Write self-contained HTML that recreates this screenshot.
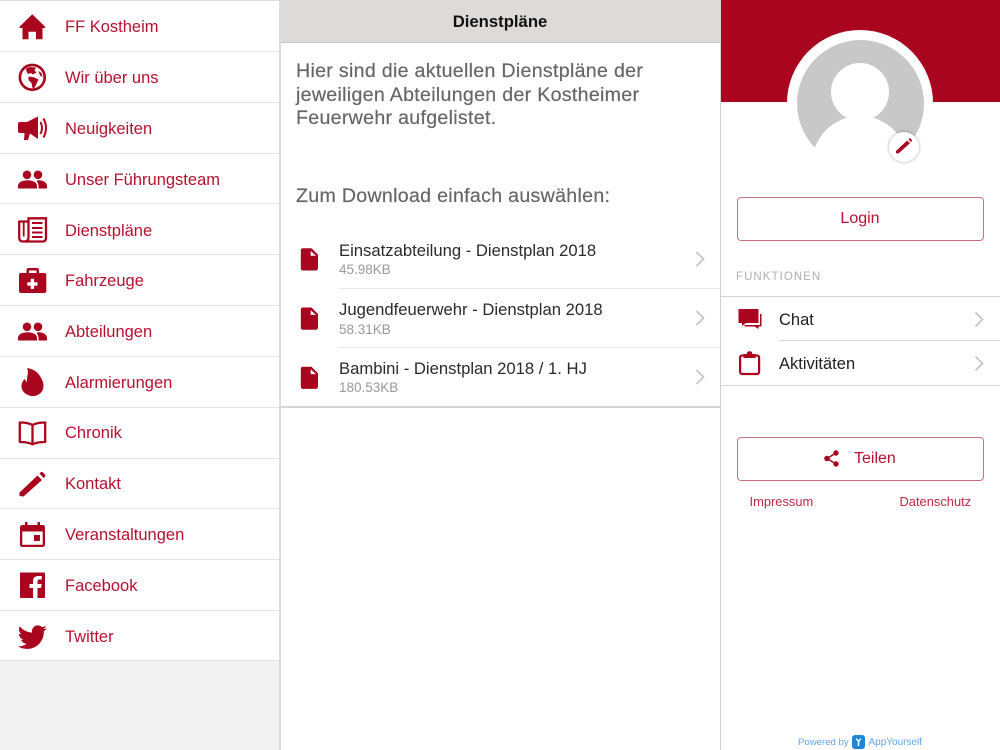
<!DOCTYPE html>
<html lang="de">
<head>
<meta charset="utf-8">
<title>Dienstpläne</title>
<style>
html,body{margin:0;padding:0;width:1000px;height:750px;overflow:hidden;background:#fff;font-family:"Liberation Sans",sans-serif}
.a{position:absolute}
.t{position:absolute;white-space:nowrap}
.m{left:65px;font-size:16.5px;line-height:20px;color:#b7112f}
.l{position:absolute;background:#e4e4e4;height:1px}
.it{left:339px;font-size:16.65px;line-height:20px;color:#2b2b2b}
.sz{left:339px;font-size:13.5px;line-height:16px;color:#999}
.p{position:absolute;left:296px;font-size:19.6px;letter-spacing:.3px;line-height:23.5px;color:#666;white-space:nowrap;-webkit-text-stroke:.2px #666}
.btn{position:absolute;left:737px;width:245px;height:42px;border:1px solid #d0707f;border-radius:4px;background:#fff}
svg{position:absolute;left:0;top:0}
</style>
</head>
<body>
<div class="a" style="left:0;top:661px;width:279px;height:89px;background:#f2f2f2"></div>
<div class="a" style="left:0;top:0;width:280px;height:1px;background:#ddd"></div>
<div class="a" style="left:279px;top:0;width:1.5px;height:750px;background:#dcdcdc"></div>
<div class="a" style="left:720px;top:0;width:1px;height:750px;background:#d2d2d2"></div>

<div class="l" style="left:0;top:51px;width:279px"></div>
<div class="l" style="left:0;top:102px;width:279px"></div>
<div class="l" style="left:0;top:153px;width:279px"></div>
<div class="l" style="left:0;top:203px;width:279px"></div>
<div class="l" style="left:0;top:254px;width:279px"></div>
<div class="l" style="left:0;top:305px;width:279px"></div>
<div class="l" style="left:0;top:356px;width:279px"></div>
<div class="l" style="left:0;top:407px;width:279px"></div>
<div class="l" style="left:0;top:458px;width:279px"></div>
<div class="l" style="left:0;top:508px;width:279px"></div>
<div class="l" style="left:0;top:559px;width:279px"></div>
<div class="l" style="left:0;top:610px;width:279px"></div>
<div class="l" style="left:0;top:660px;width:279px"></div>

<div class="t m" style="top:17px">FF Kostheim</div>
<div class="t m" style="top:68px">Wir über uns</div>
<div class="t m" style="top:119px">Neuigkeiten</div>
<div class="t m" style="top:170px">Unser Führungsteam</div>
<div class="t m" style="top:221px">Dienstpläne</div>
<div class="t m" style="top:271px">Fahrzeuge</div>
<div class="t m" style="top:322px">Abteilungen</div>
<div class="t m" style="top:373px">Alarmierungen</div>
<div class="t m" style="top:423px">Chronik</div>
<div class="t m" style="top:474px">Kontakt</div>
<div class="t m" style="top:525px">Veranstaltungen</div>
<div class="t m" style="top:576px">Facebook</div>
<div class="t m" style="top:627px">Twitter</div>

<svg width="280" height="662" viewBox="0 0 280 662" fill="#a9051e">
  <path d="M32.3 14.300 L45.500 27 L44.800 28 H42.500 V39.300 H36 V31.700 H28.500 V39.300 H22.500 V28 H20 L19.200 27Z"/>
  <circle cx="32.300" cy="77.300" r="12.400" fill="none" stroke="#a9051e" stroke-width="2.600"/>
  <path d="M26 68.500 L30 67 L36 67.500 L34.500 70.500 L36.500 72.500 L33 74.500 L31 73 L28 74 L26.500 71.500Z M28.500 76.500 L34.500 77.500 L38.500 79.500 L36.500 84 L34 88.500 L32.500 88 L31.500 83 L28.500 80Z M38.500 71 L41.500 73 L42.500 77 L40 75.500Z"/>
  <path d="M18 124 Q18 122 20 122 H27 L38 116.500 V139 L30 133.500 L28 140 H24 L24.500 133 H20 Q18 133 18 131Z"/>
  <path d="M40.500 122 Q43.500 128 40.500 134" fill="none" stroke="#a9051e" stroke-width="2"/>
  <path d="M43.500 118.500 Q48.500 128 43.500 137.500" fill="none" stroke="#a9051e" stroke-width="2"/>
  <g>
    <circle cx="27" cy="174.800" r="4.300"/><circle cx="38" cy="174.800" r="4.300"/>
    <path d="M18 188.500 V186 C18 182 23 180.300 27.500 180.300 C32 180.300 37 182 37 186 V188.500Z"/>
    <path d="M38.500 188.500 V186 C38.500 184 37.600 182.300 36.500 181 C37 180.600 38 180.300 39 180.300 C43 180.300 47 182.500 47 186 V188.500Z"/>
  </g>
  <g fill="none" stroke="#a9051e" stroke-width="2.300">
    <path d="M28 221.500 H19.200 V237.500 Q19.200 241.500 23 241.500 H42.500 Q46 241.500 46 238 V218.300 H28.500 V237.500 Q28.500 241.500 24.500 241.500"/>
    <path d="M23.700 222 V236.500" stroke-width="1.800"/>
    <path d="M32 223 H42.500 M32 228 H42.500 M32 232.500 H42.500 M32 237 H42.500" stroke-width="2"/>
  </g>
  <path d="M26.500 273 V270 Q26.500 268 28.500 268 H37 Q39 268 39 270 V273 H36.500 V270.500 H29 V273Z"/>
  <path fill-rule="evenodd" d="M21 273 H44.500 Q46.300 273 46.300 275 V291 Q46.300 293 44.500 293 H21 Q19 293 19 291 V275 Q19 273 21 273Z M30.700 278.800 V282.200 H27.300 V285.600 H30.700 V289 H34.100 V285.600 H37.500 V282.200 H34.100 V278.800Z"/>
  <g transform="translate(0 152)">
    <circle cx="27" cy="174.800" r="4.300"/><circle cx="38" cy="174.800" r="4.300"/>
    <path d="M18 188.500 V186 C18 182 23 180.300 27.500 180.300 C32 180.300 37 182 37 186 V188.500Z"/>
    <path d="M38.500 188.500 V186 C38.500 184 37.600 182.300 36.500 181 C37 180.600 38 180.300 39 180.300 C43 180.300 47 182.500 47 186 V188.500Z"/>
  </g>
  <path d="M27 368 C33.500 369 38 372 40.500 377 C42.500 380 43.500 383 43.500 386 C43.500 392 38.500 396 33 396 C27 396 21.500 392 21.500 386 C21.500 382.500 23.500 380 25 379 C25.500 381 26 381.500 27 382 C26 378 29.500 373 27 368Z"/>
  <g fill="none" stroke="#a9051e" stroke-width="2.300" stroke-linejoin="round">
    <path d="M19.800 422.500 C25 422.500 29 423 32.500 425 C36 423 40 422.500 45.200 422.500 V442 C40 442 36 442.500 32.500 444.300 C29 442.500 25 442 19.800 442Z"/>
    <path d="M32.500 425 V444"/>
  </g>
  <path d="M19.500 496 V492.500 L37.500 475.500 L42 480 L23.500 496.500Z M39.500 473.500 L41 472 Q42 471.500 43 472.500 L45 474.500 Q45.800 475.500 45 476.500 L43.500 478Z"/>
  <path d="M25 522 H27.500 V525 H37.500 V522 H40 V525 H42.500 Q45 525 45 527.500 V544.500 Q45 547 42.500 547 H22.500 Q20 547 20 544.500 V527.500 Q20 525 22.500 525 H25Z M22.300 531.500 V544.700 H42.700 V531.500Z" fill-rule="evenodd"/>
  <rect x="34" y="535" width="6" height="6"/>
  <path fill-rule="evenodd" d="M21 572.500 H44 Q45 572.500 45 573.500 V597 Q45 598 44 598 H37.500 V588 H41 L41.600 584 H37.500 V581.500 Q37.500 579.500 39.500 579.500 H41.700 V576 H38.500 Q33 576 33 581 V584 H29.500 V588 H33 V598 H21 Q20 598 20 597 V573.500 Q20 572.500 21 572.500Z"/>
  <g transform="translate(17.800 622.600) scale(1.210)"><path d="M23.953 4.570a10 10 0 01-2.825.775 4.958 4.958 0 002.163-2.723c-.951.555-2.005.959-3.127 1.184a4.920 4.920 0 00-8.384 4.482C7.690 8.095 4.067 6.130 1.640 3.162a4.822 4.822 0 00-.666 2.475c0 1.710.870 3.213 2.188 4.096a4.904 4.904 0 01-2.228-.616v.06a4.923 4.923 0 003.946 4.827 4.996 4.996 0 01-2.212.085 4.936 4.936 0 004.604 3.417 9.867 9.867 0 01-6.102 2.105c-.39 0-.779-.023-1.170-.067a13.995 13.995 0 007.557 2.209c9.053 0 13.998-7.496 13.998-13.985 0-.21 0-.42-.015-.63A9.935 9.935 0 0024 4.590z"/></g>
</svg>

<div class="a" style="left:281px;top:0;width:439px;height:42px;background:#dcdbd9;border-bottom:1px solid #c9c9c9"></div>
<div class="t" style="left:281px;width:438px;top:12px;text-align:center;font-size:16.700px;line-height:20px;font-weight:bold;color:#111">Dienstpläne</div>
<div class="p" style="top:60px">Hier sind die aktuellen Dienstpläne der</div>
<div class="p" style="top:83.500px">jeweiligen Abteilungen der Kostheimer</div>
<div class="p" style="top:107px">Feuerwehr aufgelistet.</div>
<div class="p" style="top:184.500px">Zum Download einfach auswählen:</div>

<div class="t it" style="top:241px">Einsatzabteilung - Dienstplan 2018</div>
<div class="t sz" style="top:262px">45.98KB</div>
<div class="t it" style="top:300px">Jugendfeuerwehr - Dienstplan 2018</div>
<div class="t sz" style="top:321.500px">58.31KB</div>
<div class="t it" style="top:359px">Bambini - Dienstplan 2018 / 1. HJ</div>
<div class="t sz" style="top:380px">180.53KB</div>
<div class="l" style="left:339px;top:288px;width:381px;background:#e8e8e8"></div>
<div class="l" style="left:339px;top:347px;width:381px;background:#e8e8e8"></div>
<div class="a" style="left:281px;top:406px;width:439px;height:1.500px;background:#d6d6d6"></div>

<svg width="1000" height="750" viewBox="0 0 1000 750" fill="#a9051e">
  <g><path d="M303 248.300 H311.500 L318 254.800 V268 Q318 270.500 315.500 270.500 H303 Q300.800 270.500 300.800 268 V250.500 Q300.800 248.300 303 248.300Z"/><path d="M310.700 251 L316 255.700 H310.700Z" fill="#fff"/></g>
  <g transform="translate(0 59.200)"><path d="M303 248.300 H311.500 L318 254.800 V268 Q318 270.500 315.500 270.500 H303 Q300.800 270.500 300.800 268 V250.500 Q300.800 248.300 303 248.300Z"/><path d="M310.700 251 L316 255.700 H310.700Z" fill="#fff"/></g>
  <g transform="translate(0 118.400)"><path d="M303 248.300 H311.500 L318 254.800 V268 Q318 270.500 315.500 270.500 H303 Q300.800 270.500 300.800 268 V250.500 Q300.800 248.300 303 248.300Z"/><path d="M310.700 251 L316 255.700 H310.700Z" fill="#fff"/></g>
  <g fill="none" stroke="#c4c4c4" stroke-width="1.700">
    <path d="M696.500 252 L703.500 259 L696.500 266"/>
    <path d="M696.500 311 L703.500 318 L696.500 325"/>
    <path d="M696.500 370 L703.500 377 L696.500 384"/>
    <path d="M975.500 312.500 L982.500 319.500 L975.500 326.500"/>
    <path d="M975.500 356.500 L982.500 363.500 L975.500 370.500"/>
  </g>
</svg>

<div class="a" style="left:721px;top:0;width:279px;height:102px;background:#a9051e"></div>
<div class="a" style="left:787px;top:30px;width:146px;height:146px;border-radius:50%;background:#fff"></div>
<div class="a" style="left:797px;top:40px;width:127px;height:127px;border-radius:50%;background:#c8c8c8"></div>
<div class="a" style="left:831px;top:63px;width:58px;height:58px;border-radius:50%;background:#fff"></div>
<div class="a" style="left:812px;top:116px;width:96px;height:96px;border-radius:50%;background:#fff"></div>
<div class="a" style="left:889px;top:132px;width:30px;height:30px;border-radius:50%;background:#fff;box-shadow:0 0 3px rgba(0,0,0,.35)"></div>
<svg width="1000" height="750" viewBox="0 0 1000 750" fill="#a9051e">
  <g transform="translate(883.900 -154.300) scale(.62)"><path d="M19.500 496 V492.500 L37.500 475.500 L42 480 L23.500 496.500Z M39.500 473.500 L41 472 Q42 471.500 43 472.500 L45 474.500 Q45.800 475.500 45 476.500 L43.500 478Z"/></g>
</svg>

<div class="btn" style="top:197px"></div>
<div class="t" style="left:737px;width:246px;top:208.500px;text-align:center;font-size:16px;line-height:20px;color:#b7112f">Login</div>

<div class="t" style="left:736px;top:270px;font-size:11.500px;line-height:14px;letter-spacing:1.050px;color:#b0b0b0">FUNKTIONEN</div>
<div class="a" style="left:721px;top:296px;width:279px;height:1px;background:#d4d4d8"></div>
<div class="a" style="left:779px;top:340px;width:221px;height:1px;background:#d4d4d8"></div>
<div class="a" style="left:721px;top:385px;width:279px;height:1px;background:#d4d4d8"></div>
<div class="t" style="left:779px;top:310px;font-size:16.500px;line-height:20px;color:#1f1f1f">Chat</div>
<div class="t" style="left:779px;top:354px;font-size:16.500px;line-height:20px;color:#1f1f1f">Aktivitäten</div>

<svg width="1000" height="750" viewBox="0 0 1000 750" fill="#a9051e">
  <path d="M738.500 309 H758.500 V323 H746 L742 326 V323 H738.500Z"/>
  <path d="M760 314 H761.500 V326.500 H758.500 V329 L754.500 326.500 H744.500 V325 H760Z"/>
  <rect x="740.100" y="355.500" width="19" height="18.500" rx="2" fill="none" stroke="#a9051e" stroke-width="2.200"/>
  <path d="M743.500 354 H747 V353.500 Q747 351.300 749.600 351.300 Q752.200 351.300 752.200 353.500 V354 H755.700 V358 H743.500Z"/>
</svg>

<div class="btn" style="top:437px"></div>
<div class="t" style="left:854px;top:448.500px;font-size:16px;line-height:20px;color:#b7112f">Teilen</div>
<svg width="1000" height="750" viewBox="0 0 1000 750" fill="#a9051e">
  <circle cx="836" cy="453" r="2.700"/><circle cx="836" cy="464" r="2.700"/><circle cx="827" cy="458.500" r="2.800"/>
  <path d="M836 453 L827 458.500 L836 464" fill="none" stroke="#a9051e" stroke-width="1.500"/>
</svg>
<div class="t" style="left:749.500px;top:494px;font-size:12.900px;line-height:16px;color:#bd2a43">Impressum</div>
<div class="t" style="left:899.500px;top:494px;font-size:12.900px;line-height:16px;color:#bd2a43">Datenschutz</div>

<div class="t" style="left:798px;top:736px;font-size:9.600px;line-height:13px;color:#63a6e6">Powered by</div>
<div class="a" style="left:852px;top:735px;width:13px;height:14px;border-radius:3px;background:#1f86d8"></div>
<svg width="1000" height="750" viewBox="0 0 1000 750" fill="#fff">
  <path d="M856 738 L858.500 740 L861 738 V739.500 L859.300 741.500 V746 H857.700 V741.500 L856 739.500Z"/>
</svg>
<div class="t" style="left:868.500px;top:736px;font-size:10px;line-height:13px;color:#63a6e6">AppYourself</div>
</body>
</html>
